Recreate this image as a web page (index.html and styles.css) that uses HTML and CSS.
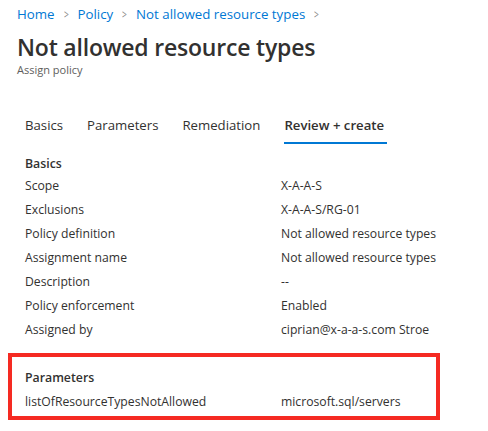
FILE: index.html
```
<!DOCTYPE html>
<html>
<head>
<meta charset="utf-8">
<link rel="stylesheet" href="styles.css">
</head>
<body>
<div class="page">
  <nav class="crumbs">
    <a class="crumb">Home</a><span class="sep">&gt;</span>
    <a class="crumb">Policy</a><span class="sep">&gt;</span>
    <a class="crumb">Not allowed resource types</a><span class="sep">&gt;</span>
  </nav>
  <h1 class="title">Not allowed resource types</h1>
  <div class="subtitle">Assign policy</div>
  <div class="tabs">
    <div class="tab">Basics</div>
    <div class="tab">Parameters</div>
    <div class="tab">Remediation</div>
    <div class="tab active">Review + create</div>
  </div>
  <section class="group">
    <div class="ghead">Basics</div>
    <div class="row"><span class="k">Scope</span><span class="v">X-A-A-S</span></div>
    <div class="row"><span class="k">Exclusions</span><span class="v">X-A-A-S/RG-01</span></div>
    <div class="row"><span class="k">Policy definition</span><span class="v">Not allowed resource types</span></div>
    <div class="row"><span class="k">Assignment name</span><span class="v">Not allowed resource types</span></div>
    <div class="row"><span class="k">Description</span><span class="v">--</span></div>
    <div class="row"><span class="k">Policy enforcement</span><span class="v">Enabled</span></div>
    <div class="row"><span class="k">Assigned by</span><span class="v">ciprian@x-a-a-s.com Stroe</span></div>
  </section>
  <section class="group boxed">
    <div class="ghead">Parameters</div>
    <div class="row"><span class="k">listOfResourceTypesNotAllowed</span><span class="v">microsoft.sql/servers</span></div>
  </section>
</div>
</body>
</html>
```
FILE: styles.css
```
html, body { margin: 0; padding: 0; background: #fff; }
body { font-family: "Open Sans", "Noto Sans", sans-serif; color: #323130; }
.page { padding: 4px 0 0 17px; width: 471px; }
.crumbs { display: flex; align-items: center; font-size: 13.3px; height: 20px; color: #0078d4; }
.crumb { color: #0078d4; }
.sep { color: #8a8886; margin: 0 8px; font-size: 12px; transform: scaleX(0.7); }
.title { margin: 8px 0 0; font-size: 23px; font-weight: 600; line-height: 30px; letter-spacing: -0.2px; }
.subtitle { font-size: 11px; color: #605e5c; line-height: 16px; margin-top: 0; }
.tabs { display: flex; gap: 24px; margin: 34px 0 0 8px; }
.tab { font-size: 13.2px; line-height: 18px; padding: 4px 0 8px; border-bottom: 2px solid transparent; }
.tab.active { font-weight: 600; border-bottom-color: #0078d4; padding-right: 3px; }
.group { margin-left: 8px; }
.ghead { font-size: 12.3px; font-weight: 600; line-height: 20px; margin-top: 10px; }
.row { display: flex; font-size: 12.2px; line-height: 24px; }
.k { width: 256px; }
.boxed { margin: 11px 0 0 -9px; width: 432px; height: 67px; box-sizing: border-box; border: 4px solid #f52a22; padding: 11px 0 0 13px; }
.boxed .ghead { margin: 0 0 2px; }
```
